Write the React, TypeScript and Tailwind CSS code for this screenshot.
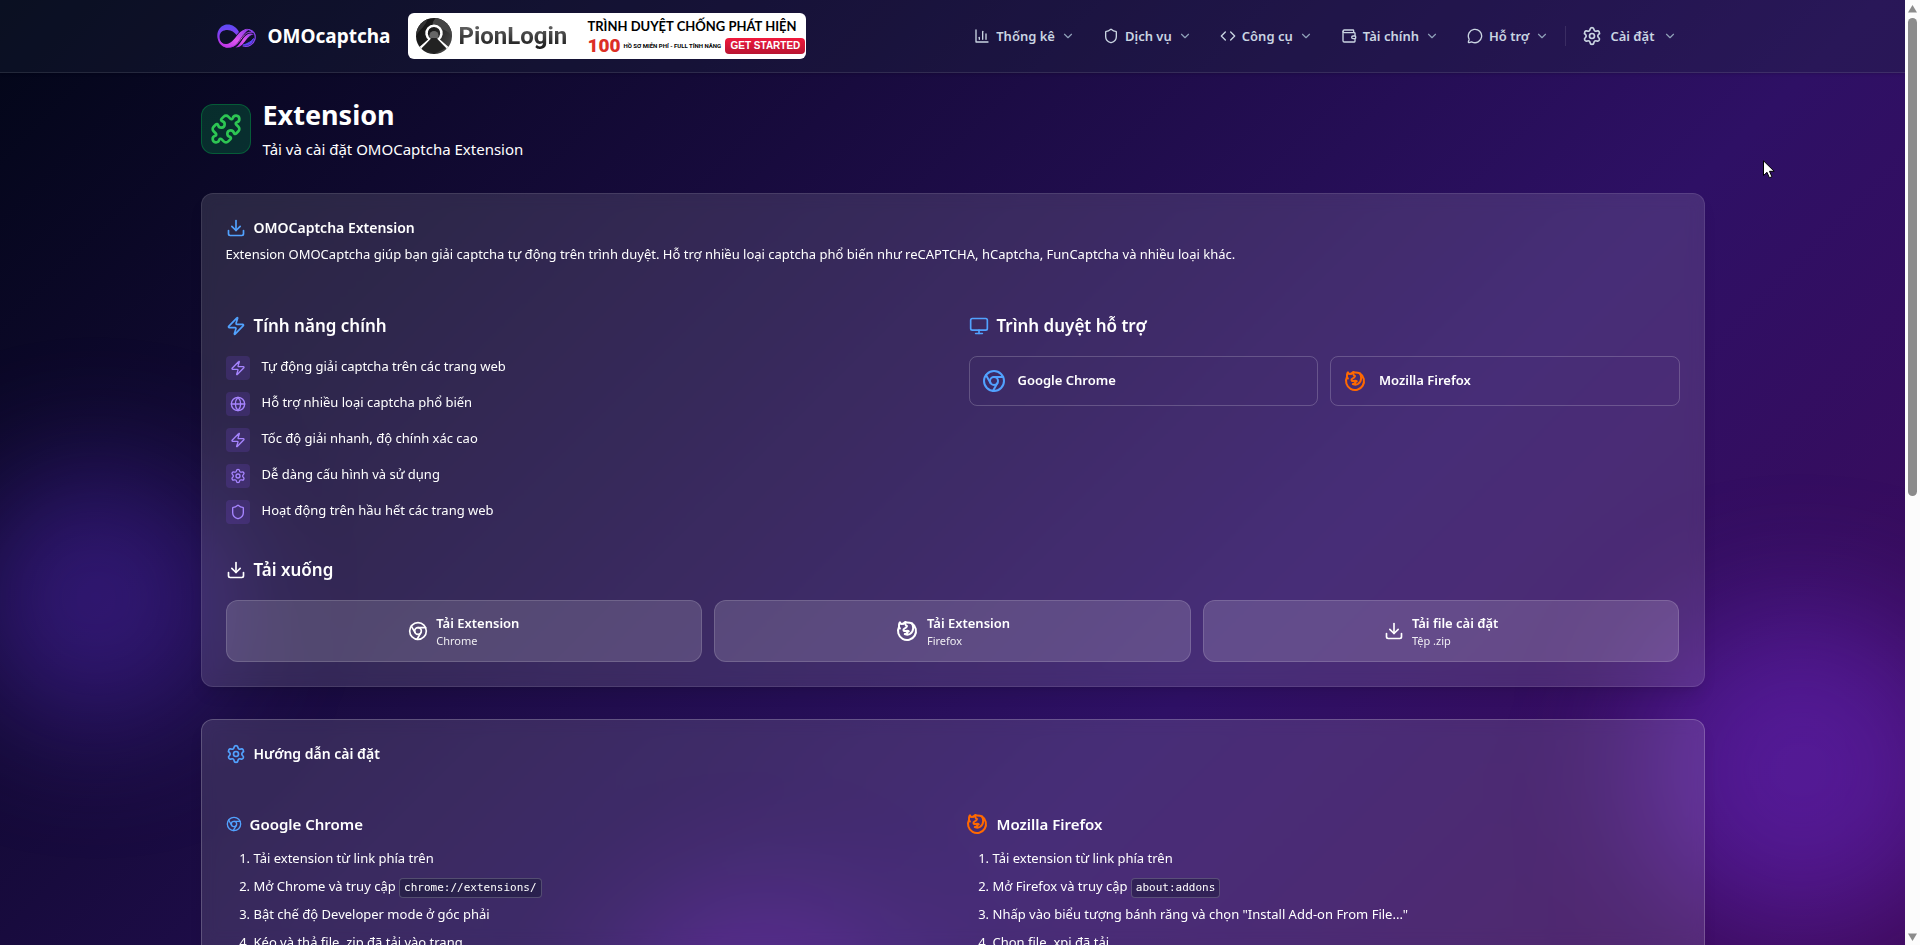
import type { ReactNode } from "react";
import {
  ChevronDown,
  Chromium,
  Code,
  Download,
  Globe,
  MessageCircle,
  Monitor,
  Puzzle,
  Settings,
  Shield,
  Wallet,
  Zap,
} from "lucide-react";
import { TbBrandFirefox } from "react-icons/tb";

function ChartIcon({ className }: { className?: string }) {
  return (
    <svg viewBox="0 0 24 24" fill="none" stroke="currentColor" strokeWidth="2" strokeLinecap="round" strokeLinejoin="round" className={className}>
      <path d="M3 3v18h18" />
      <path d="M18 17V9" />
      <path d="M13 17V5" />
      <path d="M8 17v-3" />
    </svg>
  );
}

function Logo() {
  return (
    <svg viewBox="0 0 39 24" className="h-6 w-[39px]" fill="none" strokeLinecap="round">
      <defs>
        <linearGradient id="loop" x1="0" y1="0" x2="0" y2="1">
          <stop offset="0" stopColor="#5b4bf5" />
          <stop offset="0.5" stopColor="#8b3df0" />
          <stop offset="1" stopColor="#c026d3" />
        </linearGradient>
        <linearGradient id="band" x1="1" y1="0" x2="0" y2="1">
          <stop offset="0" stopColor="#8b3bea" />
          <stop offset="0.5" stopColor="#e056f0" />
          <stop offset="1" stopColor="#b02be2" />
        </linearGradient>
      </defs>
      <path d="M22 8C19 2 13 -.5 7.500 1C2.500 2.500 -.5 8 .5 14C1.500 20 6 24 11.500 23.800C6 21.500 2.200 17 2.600 12C3 8 6 6 10.500 6C14.500 6 17.500 8.500 19.500 11Z" fill="url(#loop)" />
      <path d="M1.500 15C3 20.500 7 24 12 23.800C17.500 23.500 20.500 19 24 14C26.500 10.500 28.500 8 31.500 6C27 4.800 23.500 7 20 11.500C16.500 16 14 19.500 9.500 20C6 20.300 3.500 18 1.500 15Z" fill="url(#band)" />
      <path d="M14 22.800C20 22 22.500 16.500 26.500 12C29 9 32 7.500 35.500 8.500C31.500 3.500 27 5 23.500 9" stroke="url(#band)" strokeWidth="1" />
      <path d="M18.500 23.500C23.500 23.500 26 20 29 16C31.500 12.500 34 10.500 37 10.500C33 8 29.500 10 26.500 14C24 17.500 22 21.500 18.500 23.500Z" fill="url(#band)" />
      <path d="M32 5.500C36.500 6.500 39 10.500 38 15C36.800 20 31.500 23.500 26 22" stroke="#8b45f2" strokeWidth="1.200" />
      <path d="M26.500 21C31 22 35.500 19.500 36.500 14.500C34 18 30.500 19.500 26.500 21Z" fill="#5b46f5" stroke="#5b46f5" strokeWidth="1" />
    </svg>
  );
}

function Banner() {
  return (
    <a href="#pionlogin" className="flex h-[46px] w-[398px] shrink-0 items-center gap-1.5 overflow-hidden rounded-md bg-white pl-2 font-['Roboto',sans-serif]">
      <svg viewBox="0 0 36 36" className="size-9 shrink-0">
        <defs>
          <linearGradient id="disc" x1="0" y1="0" x2="1" y2="0.6">
            <stop offset="0" stopColor="#111" />
            <stop offset="0.5" stopColor="#1c1c1c" />
            <stop offset="1" stopColor="#444" />
          </linearGradient>
          <clipPath id="round"><circle cx="18" cy="18" r="18" /></clipPath>
        </defs>
        <g clipPath="url(#round)">
          <rect width="36" height="36" fill="url(#disc)" />
          <path d="M0 18C4 11 10 8 12 0H0Z" fill="#333" />
          <path d="M20 0C15 5 15 9 24 11C30 12 34 14 36 20V0Z" fill="#444" />
          <path d="M2 32L14 21.500A7.500 7.500 0 1 1 22 21.500L34 32" fill="none" stroke="#fff" strokeWidth="2.500" />
          <circle cx="18" cy="17.500" r="4.500" fill="#666" />
          <path d="M15.500 20H20.500L30 30L18 36L6 30Z" fill="#222" />
        </g>
      </svg>
      <span className="w-[123px] shrink-0 bg-linear-to-b from-[#777] to-[#111] bg-clip-text text-2xl leading-8 font-bold text-transparent">PionLogin</span>
      <span className="flex min-w-0 flex-1 flex-col text-black">
        <span className="font-['Lato',sans-serif] text-[13px] leading-5 font-bold whitespace-nowrap">TRÌNH DUYỆT CHỐNG PHÁT HIỆN</span>
        <span className="flex items-center gap-1">
          <span className="w-8 shrink-0 text-center font-['Roboto',sans-serif] text-[19px] leading-5 font-black text-[#dc2f26]">100</span>
          <span className="flex-1 text-[6px] leading-3 font-bold whitespace-nowrap">HỒ SƠ MIỄN PHÍ - FULL TÍNH NĂNG</span>
          <span className="mr-px w-20 shrink-0 rounded-sm bg-linear-to-b from-[#f0183c] to-[#b81432] text-center font-['Liberation_Sans',sans-serif] text-[10px] leading-4 font-bold whitespace-nowrap text-white">GET STARTED</span>
        </span>
      </span>
    </a>
  );
}

function NavItem({ icon, label, wide }: { icon: ReactNode; label: string; wide?: boolean }) {
  return (
    <button type="button" className={wide ? "flex items-center gap-2 px-3 py-2" : "flex items-center gap-1.5 px-3 py-2"}>
      {icon}
      <span className="text-[13px] leading-5 font-semibold text-slate-300">{label}</span>
      <ChevronDown className="size-3.5 text-slate-400" />
    </button>
  );
}

const nav = [
  { label: "Thống kê", icon: <ChartIcon className="size-4" /> },
  { label: "Dịch vụ", icon: <Shield className="size-4" /> },
  { label: "Công cụ", icon: <Code className="size-4" /> },
  { label: "Tài chính", icon: <Wallet className="size-4" /> },
  { label: "Hỗ trợ", icon: <MessageCircle className="size-4" /> },
];

const features = [
  { label: "Tự động giải captcha trên các trang web", icon: Zap },
  { label: "Hỗ trợ nhiều loại captcha phổ biến", icon: Globe },
  { label: "Tốc độ giải nhanh, độ chính xác cao", icon: Zap },
  { label: "Dễ dàng cấu hình và sử dụng", icon: Settings },
  { label: "Hoạt động trên hầu hết các trang web", icon: Shield },
];

const downloads = [
  { title: "Tải Extension", sub: "Chrome", icon: <Chromium className="size-5" /> },
  { title: "Tải Extension", sub: "Firefox", icon: <TbBrandFirefox className="size-6" /> },
  { title: "Tải file cài đặt", sub: "Tệp .zip", icon: <Download className="size-5" /> },
];

function Kbd({ children }: { children: string }) {
  return (
    <code className="inline-block rounded border border-white/20 bg-slate-900/40 px-1 align-middle font-['DejaVu_Sans_Mono',monospace] text-[11px] leading-[18px]">
      {children}
    </code>
  );
}

function SectionTitle({ icon, children }: { icon: ReactNode; children: string }) {
  return (
    <h3 className="mb-4 flex items-center gap-2 text-[17px] leading-7 font-semibold">
      {icon}
      {children}
    </h3>
  );
}

function Browser({ icon, name }: { icon: ReactNode; name: string }) {
  return (
    <div className="flex items-center gap-3 rounded-lg border border-white/20 p-3 text-[13px] font-semibold">
      {icon}
      {name}
    </div>
  );
}

export default function App() {
  return (
    <div className="relative flex h-screen overflow-hidden bg-white font-['Noto_Sans','Open_Sans',sans-serif] text-white">
      <div className="relative isolate min-w-0 flex-1 overflow-hidden bg-[linear-gradient(135deg,#020617,#2e1065_50%,#4a044e)] bg-[length:100%_1850px] bg-no-repeat">
        <div className="absolute top-[470px] -left-8 -z-10 size-64 rounded-full bg-[#6d33ed]/35 blur-3xl" />
        <div className="absolute top-[610px] -right-14 -z-10 size-80 rounded-full bg-[#7c2fea]/40 blur-3xl" />
        <div className="absolute top-[900px] left-[32%] -z-10 size-72 rounded-full bg-purple-600/25 blur-3xl" />

        <header className="border-b border-white/10 bg-slate-800/30 shadow-sm">
          <div className="mx-auto flex h-[72px] max-w-[1536px] items-center justify-between px-4">
            <div className="flex items-center gap-[18px] pl-4">
              <a href="#home" className="flex items-center gap-3 text-[19px] leading-7 font-bold">
                <Logo />
                OMOcaptcha
              </a>
              <Banner />
            </div>
            <nav className="flex items-center gap-1 pr-4 text-slate-300">
              {nav.map((item) => (
                <NavItem key={item.label} label={item.label} icon={item.icon} />
              ))}
              <span className="h-5 w-px bg-white/10" />
              <NavItem wide label="Cài đặt" icon={<Settings className="size-5" />} />
            </nav>
          </div>
        </header>

        <main className="mx-auto max-w-[1536px] px-4 pt-6">
          <div className="mb-8 flex items-center gap-3">
            <div className="rounded-xl border border-green-500/30 bg-green-500/20 p-2 text-[#2dc653]">
              <Puzzle className="size-8" />
            </div>
            <div>
              <h1 className="text-[27px] leading-9 font-bold">Extension</h1>
              <p className="mt-1 text-[15px] leading-6">Tải và cài đặt OMOCaptcha Extension</p>
            </div>
          </div>

          <section className="mb-8 rounded-xl border border-white/10 bg-white/12 p-6 shadow-lg backdrop-blur-sm">
            <h2 className="flex items-center gap-2 text-[14px] leading-5 font-semibold">
              <Download className="size-5 text-blue-400" />
              OMOCaptcha Extension
            </h2>
            <p className="mt-1.5 text-[13px] leading-5">
              Extension OMOCaptcha giúp bạn giải captcha tự động trên trình duyệt. Hỗ trợ nhiều loại captcha phổ biến như reCAPTCHA, hCaptcha, FunCaptcha và nhiều loại khác.
            </p>

            <div className="mt-12 grid grid-cols-2 gap-8">
              <div>
                <SectionTitle icon={<Zap className="size-5 text-blue-400" />}>Tính năng chính</SectionTitle>
                <ul className="flex flex-col gap-3">
                  {features.map(({ label, icon: Icon }) => (
                    <li key={label} className="flex gap-3">
                      <span className="rounded bg-violet-500/15 p-1 text-violet-400">
                        <Icon className="size-4" />
                      </span>
                      <span className="text-[13px] leading-5">{label}</span>
                    </li>
                  ))}
                </ul>
              </div>
              <div>
                <SectionTitle icon={<Monitor className="size-5 text-blue-400" />}>Trình duyệt hỗ trợ</SectionTitle>
                <div className="grid grid-cols-2 gap-3">
                  <Browser name="Google Chrome" icon={<Chromium className="size-6 text-blue-400" />} />
                  <Browser name="Mozilla Firefox" icon={<TbBrandFirefox className="size-6 text-[#ff6900]" />} />
                </div>
              </div>
            </div>

            <div className="mt-8">
              <SectionTitle icon={<Download className="size-5" />}>Tải xuống</SectionTitle>
              <div className="grid grid-cols-3 gap-3">
                {downloads.map(({ title, sub, icon }) => (
                  <button key={sub} type="button" className="flex items-center justify-center gap-2 rounded-xl border border-white/15 bg-white/15 py-3 text-left">
                    {icon}
                    <span className="flex flex-col">
                      <span className="text-[13px] leading-5 font-semibold">{title}</span>
                      <span className="text-[11px] leading-4 text-white/90">{sub}</span>
                    </span>
                  </button>
                ))}
              </div>
            </div>
          </section>

          <section className="rounded-xl border border-white/20 bg-white/12 p-6 shadow-lg backdrop-blur-sm">
            <h2 className="flex items-center gap-2 text-[14px] leading-5 font-semibold">
              <Settings className="size-5 text-blue-400" />
              Hướng dẫn cài đặt
            </h2>
            <div className="mt-12 grid grid-cols-2 gap-6">
              <div>
                <h3 className="mb-3 flex items-center gap-2 text-[15px] leading-6 font-semibold">
                  <Chromium className="size-4 text-blue-400" />
                  Google Chrome
                </h3>
                <ol className="flex list-decimal flex-col gap-2 pl-7 text-[13px] leading-5">
                  <li>Tải extension từ link phía trên</li>
                  <li className="h-5">Mở Chrome và truy cập <Kbd>chrome://extensions/</Kbd></li>
                  <li>Bật chế độ Developer mode ở góc phải</li>
                  <li>Kéo và thả file .zip đã tải vào trang</li>
                </ol>
              </div>
              <div>
                <h3 className="mb-3 flex items-center gap-2 text-[15px] leading-6 font-semibold">
                  <TbBrandFirefox className="size-6 text-[#ff6900]" />
                  Mozilla Firefox
                </h3>
                <ol className="flex list-decimal flex-col gap-2 pl-7 text-[13px] leading-5">
                  <li>Tải extension từ link phía trên</li>
                  <li className="h-5">Mở Firefox và truy cập <Kbd>about:addons</Kbd></li>
                  <li>Nhấp vào biểu tượng bánh răng và chọn "Install Add-on From File..."</li>
                  <li>Chọn file .xpi đã tải</li>
                </ol>
              </div>
            </div>
          </section>
        </main>
      </div>

      <div aria-hidden="true" className="flex w-[15px] shrink-0 flex-col items-center bg-[#fcfcfc] py-1">
        <svg viewBox="0 0 9 8" className="mt-px h-2 w-[9px]"><path d="M4.500 0L9 7.500H0Z" fill="#8b8b8b" /></svg>
        <div className="mt-[5px] h-[51%] w-[9px] rounded-full bg-[#8b8b8b]" />
        <svg viewBox="0 0 9 8" className="mt-auto h-2 w-[9px]"><path d="M4.500 8L0 .5H9Z" fill="#8b8b8b" /></svg>
      </div>

      <svg viewBox="0 0 12 19" className="absolute top-[160px] left-[1763px] h-[19px] w-3">
        <path d="M.5 .8V15.500L4 12.300L6.400 17.800L8.900 16.700L6.500 11.300H11.200Z" fill="#fff" stroke="#000" strokeWidth="1" />
      </svg>
    </div>
  );
}
